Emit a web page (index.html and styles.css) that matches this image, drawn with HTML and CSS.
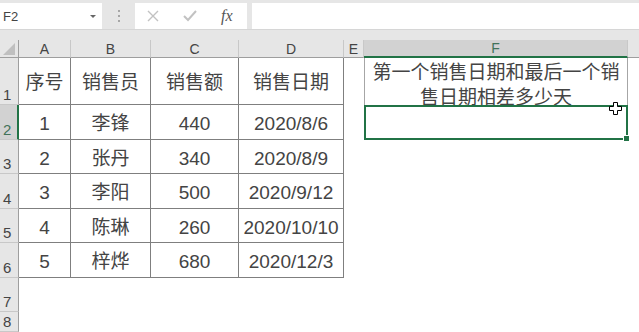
FILE: index.html
```html
<!DOCTYPE html>
<html>

<head>
  <title>Sheet</title>
  <link rel="stylesheet" href="styles.css">
</head>

<body>
  <div id="formula-bar">
    <div id="name-box">
      <span>F2</span>
      <span class="caret"></span>
    </div>
    <div id="grip">
      <svg width="4" height="12" viewBox="0 0 4 12">
        <rect x="1" y="0" width="2" height="2" fill="#a6a6a6" />
        <rect x="1" y="5" width="2" height="2" fill="#a6a6a6" />
        <rect x="1" y="10" width="2" height="2" fill="#a6a6a6" />
      </svg>
    </div>
    <div id="fx-box">
      <svg class="icon" width="14" height="14" viewBox="0 0 14 14">
        <path d="M2 2 L12 12 M12 2 L2 12" stroke="#c2c2c2" stroke-width="1.4" fill="none" />
      </svg>
      <svg class="icon" width="16" height="14" viewBox="0 0 16 14">
        <path d="M2 7 L6 11 L14 2" stroke="#c2c2c2" stroke-width="2" fill="none" />
      </svg>
      <span class="fx">fx</span>
    </div>
    <div id="formula-input"></div>
  </div>

  <div id="sheet">
    <!-- column headers -->
    <div class="corner">
      <svg width="13" height="12" viewBox="0 0 13 12"><path d="M0 12 L12 0 L12 12 Z" fill="#bfbfbf" /></svg>
    </div>
    <div class="ch">A</div>
    <div class="ch">B</div>
    <div class="ch">C</div>
    <div class="ch">D</div>
    <div class="ch">E</div>
    <div class="ch active">F</div>
    <div class="ch last"></div>

    <!-- row 1 -->
    <div class="rh">1</div>
    <div class="cell t">序号</div>
    <div class="cell t">销售员</div>
    <div class="cell t">销售额</div>
    <div class="cell t">销售日期</div>
    <div class="cell"></div>
    <div class="cell note">第一个销售日期和最后一个销售日期相差多少天</div>
    <div class="cell"></div>

    <!-- row 2 -->
    <div class="rh active">2</div>
    <div class="cell t">1</div>
    <div class="cell t">李锋</div>
    <div class="cell t">440</div>
    <div class="cell t">2020/8/6</div>
    <div class="cell"></div>
    <div class="cell selected"></div>
    <div class="cell"></div>

    <!-- row 3 -->
    <div class="rh">3</div>
    <div class="cell t">2</div>
    <div class="cell t">张丹</div>
    <div class="cell t">340</div>
    <div class="cell t">2020/8/9</div>
    <div class="cell"></div>
    <div class="cell"></div>
    <div class="cell"></div>

    <!-- row 4 -->
    <div class="rh">4</div>
    <div class="cell t">3</div>
    <div class="cell t">李阳</div>
    <div class="cell t">500</div>
    <div class="cell t">2020/9/12</div>
    <div class="cell"></div>
    <div class="cell"></div>
    <div class="cell"></div>

    <!-- row 5 -->
    <div class="rh">5</div>
    <div class="cell t">4</div>
    <div class="cell t">陈琳</div>
    <div class="cell t">260</div>
    <div class="cell t">2020/10/10</div>
    <div class="cell"></div>
    <div class="cell"></div>
    <div class="cell"></div>

    <!-- row 6 -->
    <div class="rh">6</div>
    <div class="cell t">5</div>
    <div class="cell t">梓烨</div>
    <div class="cell t">680</div>
    <div class="cell t">2020/12/3</div>
    <div class="cell"></div>
    <div class="cell"></div>
    <div class="cell"></div>

    <!-- row 7 -->
    <div class="rh">7</div>
    <div class="cell"></div>
    <div class="cell"></div>
    <div class="cell"></div>
    <div class="cell"></div>
    <div class="cell"></div>
    <div class="cell"></div>
    <div class="cell"></div>

    <!-- row 8 -->
    <div class="rh">8</div>
    <div class="cell"></div>
    <div class="cell"></div>
    <div class="cell"></div>
    <div class="cell"></div>
    <div class="cell"></div>
    <div class="cell"></div>
    <div class="cell"></div>

    <!-- mouse cursor over the sheet -->
    <svg id="cursor" width="13" height="13" viewBox="0 0 13 13">
      <path d="M4.5 0.5 H8.5 V4.5 H12.5 V8.5 H8.5 V12.5 H4.5 V8.5 H0.5 V4.5 H4.5 Z" fill="#fff" stroke="#000" stroke-width="1" />
    </svg>
  </div>
</body>

</html>
```

FILE: styles.css
```css
body {
  margin: 0;
  background-color: #e6e6e6;
  font-family: 'Liberation Sans', 'Noto Sans CJK SC', sans-serif;
  color: #444;
  overflow: hidden;
}

#formula-bar {
  display: flex;
  align-items: stretch;
  height: 26px;
  padding-top: 3px;
  border-bottom: 1px solid #d6d6d6;
  margin-bottom: 10px;
}

#name-box {
  width: 102px;
  background: #fff;
  display: flex;
  align-items: center;
  justify-content: space-between;
  padding: 0 6px 0 3px;
  box-sizing: border-box;
  font-size: 13px;
  color: #444;
}

.caret {
  width: 0;
  height: 0;
  border-left: 3px solid transparent;
  border-right: 3px solid transparent;
  border-top: 3px solid #666;
}

#grip {
  width: 33px;
  display: flex;
  align-items: center;
  justify-content: center;
}

#fx-box {
  width: 112px;
  background: #fff;
  display: flex;
  align-items: center;
  padding-left: 11px;
  box-sizing: border-box;
}

#fx-box .icon {
  margin-right: 22px;
}

.fx {
  font-family: 'Liberation Serif', serif;
  font-style: italic;
  font-size: 16px;
  color: #555;
  margin-left: 1px;
}

#formula-input {
  flex: 1;
  margin-left: 5px;
  background: #fff;
}

#sheet {
  position: relative;
  display: grid;
  grid-template-columns: 19px 52px 80px 88px 105px 20px 264px 1fr;
  grid-template-rows: 18px 47px 35px 34px 35px 34px 35px 34px 20px;
}

.corner,
.ch,
.rh {
  background: #e6e6e6;
  box-sizing: border-box;
  color: #444;
  font-size: 14px;
}

.corner {
  display: flex;
  align-items: flex-end;
  justify-content: flex-end;
  padding: 0 2px 2px 0;
  border-right: 1px solid #9e9e9e;
  border-bottom: 1px solid #9e9e9e;
}

.ch {
  display: flex;
  align-items: center;
  justify-content: center;
  border-right: 1px solid #c8c8c8;
  border-bottom: 1px solid #9e9e9e;
}

.ch.active {
  background: #d2d2d2;
  color: #41725a;
  border-bottom: 2px solid #217346;
}

.ch.last {
  border-right: none;
}

.rh {
  display: flex;
  align-items: flex-end;
  padding: 0 0 1px 3px;
  font-size: 15px;
  border-right: 1px solid #9e9e9e;
  border-bottom: 1px solid #c8c8c8;
}

.rh.active {
  background: #d2d2d2;
  color: #41725a;
  border-right: 2px solid #217346;
}

.cell {
  background: #fff;
  box-sizing: border-box;
  display: flex;
  align-items: center;
  justify-content: center;
  font-size: 19px;
  line-height: 25px;
  white-space: nowrap;
  padding-top: 3px;
}

.cell.t {
  border-right: 1px solid #7f7f7f;
  border-bottom: 1px solid #7f7f7f;
}

.note {
  white-space: normal;
  text-align: center;
  padding: 6px 6px 0;
  border-left: 1px solid #a6a6a6;
  border-right: 1px solid #a6a6a6;
  overflow: visible;
}

.selected {
  position: relative;
  border: 2px solid #217346;
}

.selected::after {
  content: "";
  position: absolute;
  right: -4px;
  bottom: -4px;
  width: 5px;
  height: 5px;
  background: #217346;
  border: 1px solid #fff;
}

#cursor {
  position: absolute;
  left: 609px;
  top: 62px;
}
```
